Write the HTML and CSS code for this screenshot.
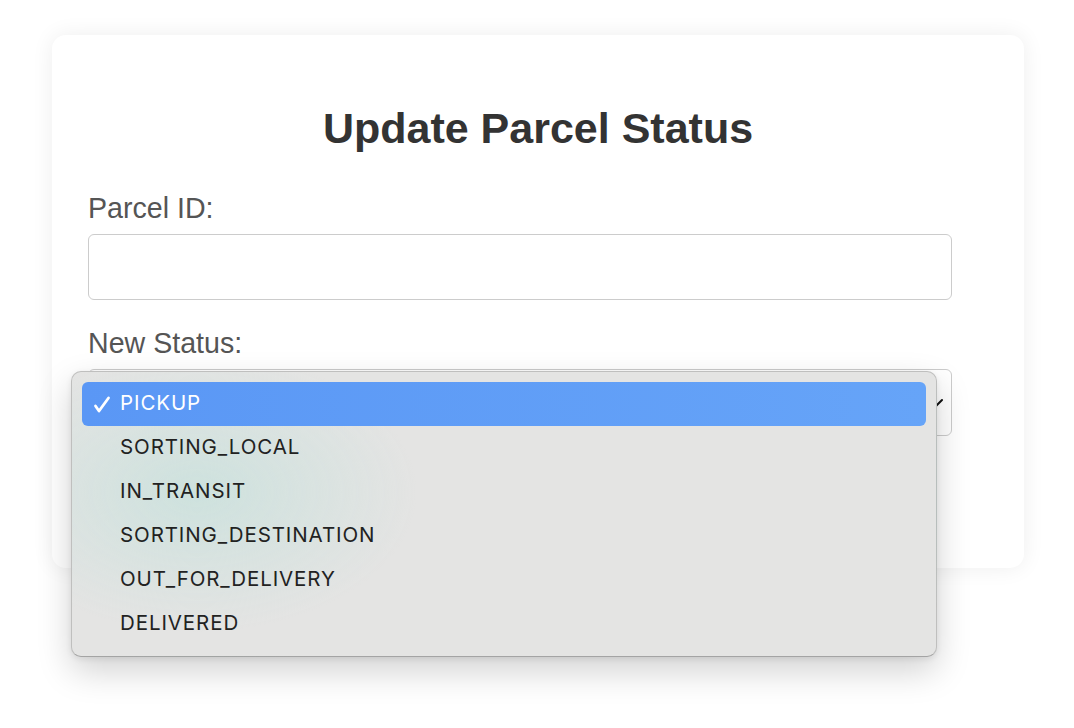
FILE: index.html
```html
<!DOCTYPE html>
<html lang="en">
<head>
<meta charset="utf-8">
<title>Update Parcel Status</title>
<link rel="stylesheet" href="styles.css">
</head>
<body>
<div class="card">
  <h2 class="title">Update Parcel Status</h2>
  <form class="form">
    <label class="label" for="pid">Parcel ID:</label>
    <div class="input" id="pid"></div>
    <label class="label label-status">New Status:</label>
    <div class="select-wrap">
      <div class="select">
        <svg class="chev" width="18" height="12" viewBox="0 0 18 12"><path d="M1 2 L9 10 L17 2" fill="none" stroke="#111" stroke-width="2" stroke-linecap="round" stroke-linejoin="round"/></svg>
      </div>
      <div class="menu">
        <div class="opt opt-sel">
          <svg class="check" width="20" height="20" viewBox="0 0 20 20"><path d="M3.5 12 L7 17 L16.5 4" fill="none" stroke="#fff" stroke-width="2.8" stroke-linecap="round" stroke-linejoin="round"/></svg>
          <span>PICKUP</span>
        </div>
        <div class="opt"><span>SORTING_LOCAL</span></div>
        <div class="opt"><span>IN_TRANSIT</span></div>
        <div class="opt"><span>SORTING_DESTINATION</span></div>
        <div class="opt"><span>OUT_FOR_DELIVERY</span></div>
        <div class="opt"><span>DELIVERED</span></div>
      </div>
    </div>
  </form>
</div>
</body>
</html>
```

FILE: styles.css
```css
html, body {
  margin: 0;
  padding: 0;
  background: #ffffff;
}

body {
  box-sizing: border-box;
  min-height: 728px;
  padding: 35px 50px 0 52px;
  font-family: "Liberation Sans", Arial, sans-serif;
}

.card {
  position: relative;
  box-sizing: border-box;
  width: 972px;
  height: 533px;
  background: #fff;
  border-radius: 14px;
  box-shadow: 0 0 22px rgba(0, 0, 0, 0.07);
  padding: 36px 36px 36px 36px;
  overflow: visible;
}

.title {
  margin: 33px 0 40px 0;
  font-size: 43px;
  line-height: 48px;
  font-weight: bold;
  color: #333;
  text-align: center;
}

.form {
  display: flex;
  flex-direction: column;
  align-items: flex-start;
}

.label {
  display: block;
  font-size: 28.6px;
  line-height: 32px;
  color: #555;
  margin-bottom: 10px;
}

.label-status {
  margin-top: 27px;
}

.input {
  box-sizing: border-box;
  width: 864px;
  height: 66px;
  border: 1px solid #cccccc;
  border-radius: 6px;
  background: #fff;
}

.select-wrap {
  position: relative;
  width: 864px;
  z-index: 5;
}

.select {
  box-sizing: border-box;
  width: 864px;
  height: 67px;
  border: 1px solid #cccccc;
  border-radius: 6px;
  background: #fff;
  display: flex;
  align-items: center;
  justify-content: flex-end;
  padding: 0 8px 0 18px;
}

.chev {
  margin-top: 2px;
}

.menu {
  position: absolute;
  top: 2px;
  left: -17px;
  z-index: 10;
  box-sizing: border-box;
  width: 866px;
  padding: 10px;
  border-radius: 10px;
  border: 1px solid rgba(0, 0, 0, 0.16);
  border-bottom-color: rgba(0, 0, 0, 0.28);
  background:
    radial-gradient(ellipse 220px 140px at 125px 120px, rgba(190, 224, 218, 0.6), rgba(190, 224, 218, 0) 100%),
    #e4e4e3;
  box-shadow: 0 14px 34px rgba(0, 0, 0, 0.18), 0 2px 6px rgba(0, 0, 0, 0.08);
  font-family: Inter, "Noto Sans", sans-serif;
  font-size: 20.5px;
  color: #222;
}

.opt {
  box-sizing: border-box;
  height: 44px;
  display: flex;
  align-items: center;
  padding-left: 38px;
  padding-bottom: 3px;
  border-radius: 6px;
  letter-spacing: 0.9px;
}

.opt-sel {
  position: relative;
  color: #fff;
  background: linear-gradient(90deg, #5a97f5 0%, #66a4f8 100%);
}

.check {
  position: absolute;
  left: 10px;
  top: 12px;
}
```
